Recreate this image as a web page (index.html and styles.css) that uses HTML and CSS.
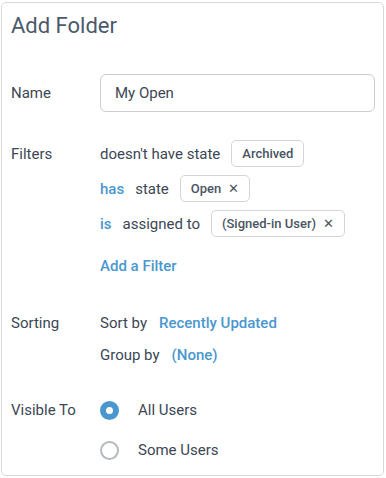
FILE: index.html
```html
<!DOCTYPE html>
<html lang="en">
<head>
  <meta charset="UTF-8" />
  <meta name="viewport" content="width=device-width, initial-scale=1.0"/>
  <title>Add Folder</title>
  <link rel="stylesheet" href="styles.css">
</head>
<body>

  <div class="card">
    <h2 class="title">Add Folder</h2>

    <div class="field field-name">
      <div class="label">Name</div>
      <div class="value">
        <input class="text-input" type="text" value="My Open" />
      </div>
    </div>

    <div class="field field-filters">
      <div class="label">Filters</div>
      <div class="value stack">
        <div class="filter-row">
          <span>doesn't have state</span>
          <span class="chip">Archived</span>
        </div>
        <div class="filter-row">
          <span class="link">has</span>
          <span>state</span>
          <span class="chip">Open <span class="close">&#x2715;</span></span>
        </div>
        <div class="filter-row">
          <span class="link">is</span>
          <span>assigned to</span>
          <span class="chip">(Signed-in User) <span class="close">&#x2715;</span></span>
        </div>
        <div class="add-row">
          <span class="link">Add a Filter</span>
        </div>
      </div>
    </div>

    <div class="field field-sorting">
      <div class="label">Sorting</div>
      <div class="value stack-text">
        <div class="text-row"><span>Sort by</span> <span class="link">Recently Updated</span></div>
        <div class="text-row"><span>Group by</span> <span class="link">(None)</span></div>
      </div>
    </div>

    <div class="field field-visible">
      <div class="label">Visible To</div>
      <div class="value stack-radio">
        <label class="radio-row">
          <span class="radio checked"></span>
          <span>All Users</span>
        </label>
        <label class="radio-row">
          <span class="radio"></span>
          <span>Some Users</span>
        </label>
      </div>
    </div>
  </div>

</body>
</html>
```

FILE: styles.css
```css
* {
  box-sizing: border-box;
}

body {
  margin: 0;
  padding: 0;
  background: #fff;
  font-family: Roboto, 'Liberation Sans', sans-serif;
  font-size: 15px;
  color: #3b4754;
}

.card {
  margin: 2px 2px 2px 1px;
  height: 474px;
  border: 1px solid #d5d9dd;
  border-radius: 5px;
  padding: 11px 9px 0 9px;
}

.title {
  margin: 0;
  font-size: 22px;
  font-weight: 400;
  line-height: 24px;
  color: #4a5a6b;
}

.field {
  display: flex;
  align-items: flex-start;
}

.label {
  width: 89px;
  flex-shrink: 0;
  line-height: 20px;
}

.value {
  flex: 1;
}

/* Name */
.field-name {
  margin-top: 36px;
  align-items: center;
}

.text-input {
  width: 275px;
  height: 38px;
  border: 1px solid #c9ced3;
  border-radius: 6px;
  padding: 0 14px;
  font-family: inherit;
  font-size: 15px;
  color: #3b4754;
  outline: none;
}

/* Filters */
.field-filters {
  margin-top: 28px;
}

.field-filters .label {
  margin-top: 4px;
}

.stack {
  display: flex;
  flex-direction: column;
  gap: 8px;
}

.filter-row {
  display: flex;
  align-items: center;
  gap: 11px;
  height: 27px;
}

.chip {
  display: inline-flex;
  align-items: center;
  gap: 7px;
  height: 27px;
  padding: 0 10px;
  border: 1px solid #d2d6da;
  border-radius: 5px;
  font-size: 13px;
  font-weight: 500;
  color: #4a5563;
}

.close {
  font-size: 13px;
  font-weight: 400;
  color: #4a5563;
}

.link {
  color: #4a97cf;
  font-weight: 500;
}

.add-row {
  margin-top: 11px;
  line-height: 20px;
}

/* Sorting */
.field-sorting {
  margin-top: 37px;
}

.stack-text {
  display: flex;
  flex-direction: column;
  gap: 12px;
}

.text-row {
  display: flex;
  gap: 12px;
  line-height: 20px;
}

/* Visible to */
.field-visible {
  margin-top: 35px;
}

.stack-radio {
  display: flex;
  flex-direction: column;
  gap: 20px;
}

.radio-row {
  display: flex;
  align-items: center;
  gap: 19px;
  height: 20px;
}

.radio {
  width: 19px;
  height: 19px;
  border-radius: 50%;
  border: 2px solid #b3bac1;
  background: #fff;
}

.radio.checked {
  border: 6px solid #4a97cf;
}
```
